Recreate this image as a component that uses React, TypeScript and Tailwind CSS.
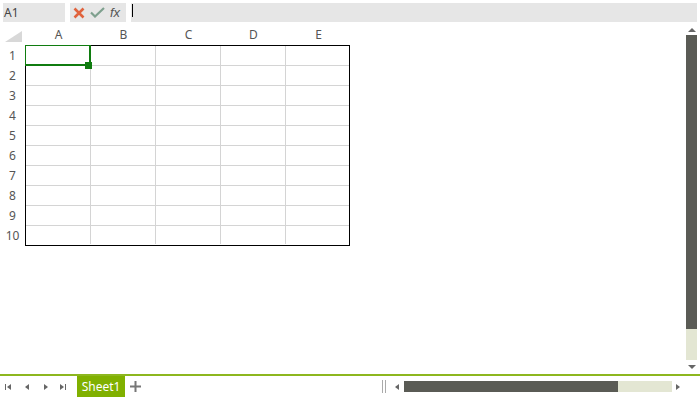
import React from "react";

const COLS = ["A", "B", "C", "D", "E"];
const ROWS = [1, 2, 3, 4, 5, 6, 7, 8, 9, 10];

function Tri({ dir, className }: { dir: "l" | "r" | "u" | "d"; className?: string }) {
  const pts = {
    l: "4,0 4,6 0,3",
    r: "0,0 0,6 4,3",
    u: "0,4 8,4 4,0",
    d: "0,0 8,0 4,4",
  }[dir];
  const w = dir === "l" || dir === "r" ? 4 : 8;
  const h = dir === "l" || dir === "r" ? 6 : 4;
  return (
    <svg width={w} height={h} viewBox={`0 0 ${w} ${h}`} className={className}>
      <polygon points={pts} fill="#666" />
    </svg>
  );
}

function FormulaBar() {
  return (
    <div className="h-[25px] flex items-start pt-[3px] px-[3px] gap-[5px] shrink-0">
      <div className="w-[62px] h-[19px] bg-[#e6e6e6] text-[12px] leading-[19px] pl-[1px] text-[#444]">A1</div>
      <div className="w-[56px] h-[19px] bg-[#e6e6e6] flex items-center pl-[3px] gap-[5px]">
        <svg width="12" height="12" viewBox="0 0 12 12">
          <path d="M1.5 1.5 L10.5 10.5 M10.5 1.5 L1.5 10.5" stroke="#e0633d" strokeWidth="2.6" />
        </svg>
        <svg width="15" height="11" viewBox="0 0 15 11">
          <path d="M1 5.5 L5 9.5 L14 1" stroke="#7ea08e" strokeWidth="2.2" fill="none" />
        </svg>
        <span className="italic text-[13px] text-[#555] leading-none" style={{ fontFamily: "'Liberation Sans', sans-serif" }}>
          fx
        </span>
      </div>
      <div className="flex-1 h-[19px] bg-[#e6e6e6] relative">
        <div className="absolute left-[1px] top-[1px] w-px h-[13px] bg-black" />
      </div>
    </div>
  );
}

function Sheet() {
  return (
    <div className="flex-1 flex flex-col">
      <div className="h-[20px] flex">
        <div className="w-[25px] h-[20px] relative">
          <svg width="25" height="20" viewBox="0 0 25 20" className="absolute left-0 top-0">
            <polygon points="22,6 22,17 5,17" fill="#d8d8d8" />
          </svg>
        </div>
        <div className="flex pl-px">
          {COLS.map((c) => (
            <div key={c} className="w-[65px] text-center text-[12px] leading-[20px] text-[#555]">
              {c}
            </div>
          ))}
        </div>
      </div>
      <div className="flex">
        <div className="w-[25px] flex flex-col pt-px">
          {ROWS.map((r) => (
            <div key={r} className="h-[20px] text-center text-[12px] leading-[19px] text-[#555]">
              {r}
            </div>
          ))}
        </div>
        <div className="relative border border-black">
          <div className="grid grid-cols-[65px_65px_65px_65px_63px]">
            {ROWS.map((r) =>
              COLS.map((c, ci) => (
                <div
                  key={c + r}
                  className={
                    "border-[#d4d4d4] " +
                    (ci < 4 ? "border-r " : "") +
                    (r < 10 ? "h-[20px] border-b" : "h-[18px]")
                  }
                />
              ))
            )}
          </div>
          <div className="absolute -left-px -top-px w-[66px] h-[21px] border border-[#107c10] border-r-2 border-b-2" />
          <div className="absolute left-[59px] top-[16px] w-[7px] h-[7px] bg-[#107c10]" />
        </div>
      </div>
    </div>
  );
}

function VScroll() {
  return (
    <div className="w-[11px] mr-[3px] flex flex-col items-center">
      <div className="h-[10px] flex items-center justify-center">
        <Tri dir="u" />
      </div>
      <div className="w-[11px] h-[294px] bg-[#5a5b55]" />
      <div className="w-[11px] h-[31px] bg-[#e3e6d3]" />
      <div className="flex-1 flex items-center justify-center">
        <Tri dir="d" />
      </div>
    </div>
  );
}

function BottomBar() {
  return (
    <div className="shrink-0">
      <div className="h-[2px] bg-[#8db71f]" />
      <div className="h-[24px] flex items-start">
        <div className="flex items-center h-[21px] pl-[5px] text-[#666]">
          <div className="flex items-center w-[20px]">
            <div className="w-px h-[6px] bg-[#666]" />
            <Tri dir="l" className="ml-px" />
          </div>
          <div className="w-[18px]">
            <Tri dir="l" />
          </div>
          <div className="w-[17px] pl-px">
            <Tri dir="r" />
          </div>
          <div className="flex items-center w-[17px]">
            <Tri dir="r" />
            <div className="w-px h-[6px] bg-[#666] ml-px" />
          </div>
        </div>
        <div className="h-[21px] w-[48px] bg-[#80b000] text-white text-[12px] leading-[21px] text-center">
          Sheet1
        </div>
        <div className="h-[21px] flex items-center pl-[5px]">
          <svg width="11" height="11" viewBox="0 0 11 11">
            <path d="M5.5 0 V11 M0 5.5 H11" stroke="#777" strokeWidth="2" />
          </svg>
        </div>
        <div className="flex-1" />
        <div className="h-[21px] flex items-center pr-[20px]">
          <div className="flex gap-[2px] mr-[9px]">
            <div className="w-px h-[13px] bg-[#aaa]" />
            <div className="w-px h-[13px] bg-[#aaa]" />
          </div>
          <Tri dir="l" />
          <div className="ml-[5px] w-[214px] h-[11px] bg-[#5a5b55]" />
          <div className="w-[54px] h-[11px] bg-[#e3e6d3]" />
          <Tri dir="r" className="ml-[4px]" />
        </div>
      </div>
    </div>
  );
}

export default function App() {
  return (
    <div
      className="w-[700px] h-[400px] bg-white flex flex-col overflow-hidden"
      style={{ fontFamily: "'Noto Sans', 'Open Sans', sans-serif" }}
    >
      <FormulaBar />
      <div className="flex-1 flex">
        <Sheet />
        <VScroll />
      </div>
      <BottomBar />
    </div>
  );
}
